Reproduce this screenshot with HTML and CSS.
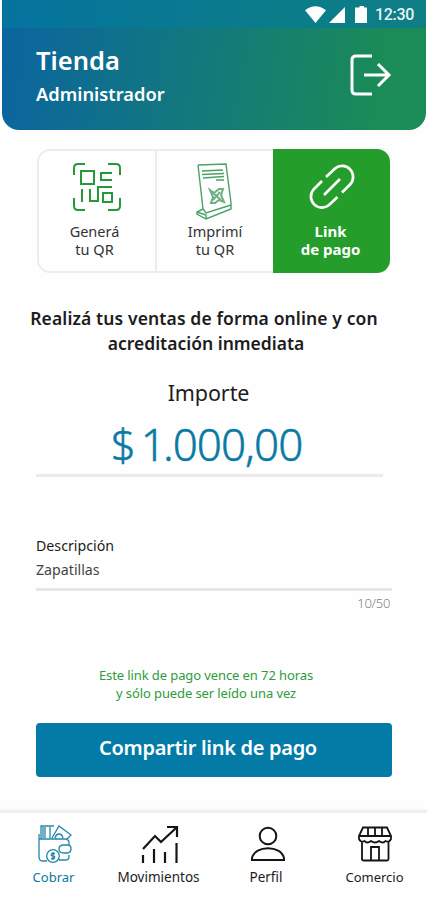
FILE: index.html
```
<!DOCTYPE html>
<html lang="es">
<head>
<meta charset="utf-8">
<title>Tienda</title>
<link rel="stylesheet" href="styles.css">
</head>
<body>
<div class="app">
  <header class="header">
    <div class="status">
      <svg class="signals" width="62" height="18" viewBox="0 0 62 18" fill="#fff"><path d="M0 4.300Q10.500 -3.600 21 4.300L10.500 17zM24 17L40 1V17zM53 1.500H54.500V0h4.500v1.500h3V17h-12V1.500z"/></svg>
      <span class="clock">12:30</span>
    </div>
    <div class="account">
      <div>
        <h1 class="store">Tienda</h1>
        <p class="role">Administrador</p>
      </div>
      <svg class="exit" width="42" height="42" viewBox="0 0 42 42" fill="none" stroke="#fff" stroke-width="3"><path d="M22 2H6Q2 2 2 6V36Q2 40 6 40H22M14 21H39M28 10L39 21L28 32"/></svg>
    </div>
  </header>
  <main class="main">
    <nav class="tabs">
      <a class="tab">
        <svg class="qr" width="48" height="48" viewBox="0 0 48 48" fill="none" stroke="#27983a" stroke-width="2"><path d="M1 12V5Q1 1 5 1H12M35 1H43Q47 1 47 5V12M47 35V43Q47 47 43 47H35M12 47H5Q1 47 1 43V35M8 8H21V21H8zM39 10H28V17H39M39 24H25V38H17V26M9 26V39M30 30H39V39H30z"/></svg>
        <span class="tab-text">Generá</span><span>tu QR</span>
      </a>
      <a class="tab">
        <svg class="stand" width="38" height="58" viewBox="0 0 38 58" fill="none" stroke="#4aa267" stroke-width="1.400"><path d="M2 2L30 1L35 40V46L10 56L1 51V49L7 46L2 2M7 46L10 50L35 42M1 49L10 52V56M6 8L27 7M6 11.500L28 10.500M7 15L28 13.500M20 17H28"/><path stroke="#6fb083" stroke-width="2" d="M14 27L18 30L23 26L27 26L25 32L28 39L23 37L19 40L15 40L17 34zM17 30L25 37M24 29L17 37"/></svg>
        <span class="tab-text">Imprimí</span><span>tu QR</span>
      </a>
      <a class="tab active">
        <svg width="46" height="46" viewBox="0 0 46 46" fill="none" stroke="#fff" stroke-width="2.700"><path d="M17 13L26 4.500A11 11 0 0 1 41.500 20L33 28.500M13 17L4.500 25.500A11 11 0 0 0 20 41L28.500 33M15 31L31 15"/></svg>
        <span class="tab-text">Link</span><span>de pago</span>
      </a>
    </nav>
    <h2 class="lead"><span class="wide">Realizá tus ventas de forma online y con</span><span class="second">acreditación inmediata</span></h2>
    <div class="amount-label">Importe</div>
    <div class="amount"><span class="currency">$</span><span class="one">1</span>.000,00</div>
    <div class="description">
      <label class="field-label">Descripción</label>
      <div class="field-value">Zapatillas</div>
    </div>
    <div class="counter">10/50</div>
    <p class="notice">Este link de pago vence en 72 horas<br>y sólo puede ser leído una vez</p>
    <button class="share"><span>Compartir link de pago</span></button>
  </main>
  <footer class="bottom">
    <a class="item cobrar">
      <svg width="36" height="38" viewBox="0 0 36 38" fill="none" stroke="#2486a8" stroke-width="1.300"><path d="M10 36H6Q2 36 2 32V14H28Q32 14 32 18V21M32 30V32Q32 35 28 35H22M4 14V1H17M6 2V13M8 2V13M13 13V2M15 13L22 1L34 10L30 14M18 13Q19 9 22 9Q25 9 26 13M31 20H27Q22 20 22 24Q22 28 27 28H31Q34 27 34 24Q34 20 31 20zM2 9V14"/><circle cx="16" cy="31" r="6.300"/><path d="M18 28.500H15Q13 31 16 31Q19 31 17 33.500H14M16 27V35"/></svg>
      <span>Cobrar</span>
    </a>
    <a class="item movimientos">
      <svg width="38" height="38" viewBox="0 0 38 38" fill="none" stroke="#151515" stroke-width="2.200"><path d="M2 24L14 11L20 17L35 3M26 2H36V12M2 30V38M13 24V38M24 27V38M35.500 18V38"/></svg>
      <span>Movimientos</span>
    </a>
    <a class="item perfil">
      <svg width="34" height="36" viewBox="0 0 34 36" fill="none" stroke="#151515" stroke-width="2"><circle cx="17" cy="10" r="8.300"/><path d="M1 34V32C4 19 30 19 33 32V34z"/></svg>
      <span>Perfil</span>
    </a>
    <a class="item comercio">
      <svg width="34" height="36" viewBox="0 0 34 36" fill="none" stroke="#151515" stroke-width="1.800"><path d="M5 1.500H29L33 10V13Q31 17 27.500 15Q25 18 21 15Q17 18 13 15Q9 18 6.500 15Q3 17 1 13V10zM1 10H33M10 2V10M17 2V10M24 2V10M4 16V33Q4 34.500 6 34.500H29Q30.500 34.500 30.500 33V16M13 34V21H21V34"/></svg>
      <span>Comercio</span>
    </a>
  </footer>
</div>
</body>
</html>
```
FILE: styles.css
```
* { box-sizing: border-box; margin: 0; padding: 0; }
body { background: #fefefe; font-family: "Noto Sans", "Open Sans", sans-serif; color: #1c1c1c; }
.app { width: 427px; height: 900px; display: flex; flex-direction: column; overflow: hidden; }
.app span { white-space: nowrap; }
.header { height: 130px; margin: 0 1px 0 2px; border-radius: 0 0 17px 17px; overflow: hidden; background: linear-gradient(100deg, #0b659f 2%, #147b78 52%, #1b8b57 88%); flex: none; }
.status { height: 28px; display: flex; justify-content: flex-end; gap: 8px; padding: 6px 12px 0 0; background: linear-gradient(90deg, #05739f, #0a7c8b 60%, #0e7f85); }
.clock { font: 500 16px/17px Roboto, sans-serif; color: #e7f4f4; width: 39px; letter-spacing: -.3px; }
.signals { flex: none; }
.account { display: flex; justify-content: space-between; padding: 17px 34px 0 34px; color: #fff; }
.store { font-size: 25.500px; line-height: 31px; font-weight: 600; }
.role { font-size: 18.300px; line-height: 28px; font-weight: 600; margin-top: 4px; }
.exit { margin-top: 9px; }
.main { height: 680px; padding-left: 36px; flex: none; display: flex; flex-direction: column; align-items: flex-start; }
.tabs { width: 353px; height: 124px; margin: 19px 0 0 1px; display: grid; grid-template-columns: 118px 118px 1fr; border: 2px solid #ededed; border-radius: 13px; flex: none; }
.tab { display: flex; flex-direction: column; align-items: center; padding: 12px 5px 0 0; border-right: 2px solid #ededed; font-size: 14.500px; line-height: 18px; color: #333; }
.qr { margin-left: 5px; flex: none; }
.tab:nth-child(2) { border-right: 0; padding: 12px 2px 0 0; }
.tab-text { margin-top: 11px; }
.stand { margin-bottom: -10px; flex: none; }
.tab.active { background: #249d2b; border: 0; border-radius: 0 13px 13px 0; margin: -2px; padding: 15px 2px 0 0; color: #fff; font-weight: 700; font-size: 15px; }
.active svg { margin-left: 2px; }
.active .tab-text { margin-top: 12px; }
.lead { width: 340px; margin-top: 33px; font-size: 17.500px; line-height: 25px; font-weight: 600; display: flex; flex-direction: column; align-items: center; }
.wide { letter-spacing: .12px; margin-left: -4px; }
.amount-label { width: 345px; text-align: center; font-size: 21.500px; line-height: 30px; margin-top: 22px; letter-spacing: -.1px; }
.amount { width: 347px; height: 69px; border-bottom: 3px solid #ebebeb; padding-right: 6px; text-align: center; font-size: 44px; line-height: 73px; font-weight: 350; letter-spacing: -1px; color: #087aa4; -webkit-text-stroke: .5px #087aa4; white-space: nowrap; }
.currency { margin-right: 6px; }
.one { letter-spacing: -3px; }
.description { width: 356px; height: 55px; margin-top: 59px; border-bottom: 3px solid #e7e7e7; }
.field-label { display: block; font-size: 14.200px; line-height: 20px; margin-bottom: 4px; }
.field-value { font-size: 14.200px; line-height: 20px; color: #444; }
.counter { width: 354px; text-align: right; font-size: 13px; line-height: 20px; margin-top: 2px; color: #808080; font-weight: 350; letter-spacing: -.3px; }
.notice { width: 340px; margin-top: 53px; text-align: center; font-size: 13px; line-height: 18px; letter-spacing: -.1px; color: #309b3c; }
.share { width: 356px; height: 54px; margin-top: 21px; border: 0; border-radius: 4px; background: #037ba6; color: #fff; font: 600 20px/30px "Noto Sans", sans-serif; letter-spacing: -.3px; padding: 0 12px 5px 0; }
.bottom { height: 90px; border-top: 3px solid #efefef; box-shadow: 0 -1px 3px #f4f4f4; display: grid; grid-template-columns: 107px 103px 112px 105px; }
.item { display: flex; flex-direction: column; align-items: center; padding-top: 12px; font-size: 13.500px; line-height: 20px; }
.item svg { height: 38px; flex: none; margin-left: 3px; }
.item span { margin-top: 4px; }
.cobrar { color: #087aa4; font-size: 13px; }
.comercio { font-size: 13px; }
.comercio svg { margin-left: 0; }
```
